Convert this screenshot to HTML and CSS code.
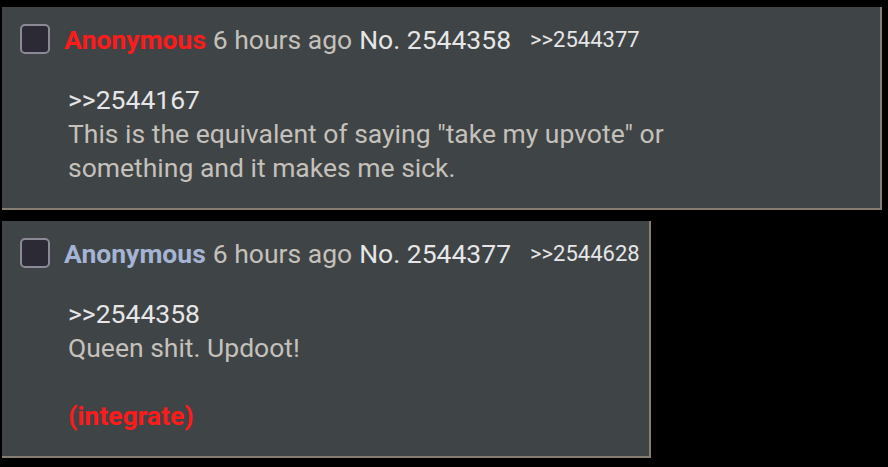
FILE: index.html
```html
<!DOCTYPE html>
<html lang="en">

<head>
    <meta charset="UTF-8">
    <meta name="viewport" content="width=device-width, initial-scale=1.0">
    <title>Thread</title>
    <link rel="stylesheet" href="styles.css">
</head>

<body>
    <div class="thread">
        <div class="post wide">
            <div class="postInfo">
                <label class="check"><input type="checkbox"><span class="box"></span></label>
                <span class="name red">Anonymous</span>
                <span class="time">6 hours ago</span>
                <span class="postNum">No. 2544358</span>
                <span class="backlink">&gt;&gt;2544377</span>
            </div>
            <div class="message">
                <span class="quotelink">&gt;&gt;2544167</span><br>
                This is the equivalent of saying "take my upvote" or something and it makes me sick.
            </div>
        </div>
        <div class="post">
            <div class="postInfo">
                <label class="check"><input type="checkbox"><span class="box"></span></label>
                <span class="name">Anonymous</span>
                <span class="time">6 hours ago</span>
                <span class="postNum">No. 2544377</span>
                <span class="backlink">&gt;&gt;2544628</span>
            </div>
            <div class="message">
                <span class="quotelink">&gt;&gt;2544358</span><br>
                Queen shit. Updoot!<br>
                <br>
                <b class="red">(integrate)</b>
            </div>
        </div>
    </div>
</body>

</html>
```

FILE: styles.css
```css
* {
    margin: 0;
    padding: 0;
    box-sizing: border-box;
}

body {
    background-color: #000;
    font-family: Roboto, "Liberation Sans", sans-serif;
    font-size: 26.5px;
    color: #c5c1ba;
}

.thread {
    display: flex;
    flex-direction: column;
    align-items: flex-start;
    gap: 11px;
    padding: 7px 6px 0 2px;
}

.post {
    background-color: #3f4447;
    border-right: 2px solid #867f71;
    border-bottom: 2px solid #867f71;
    padding: 15px 9px 23px 18px;
}

.post.wide {
    align-self: stretch;
}

.postInfo {
    display: flex;
    align-items: center;
    gap: 7px;
    height: 34px;
    white-space: nowrap;
}

.check {
    display: inline-block;
    width: 30px;
    height: 30px;
    margin-right: 7px;
}

.check input {
    display: none;
}

.check .box {
    display: block;
    width: 100%;
    height: 100%;
    background-color: #2b2a35;
    border: 2px solid #8b8a96;
    border-radius: 5px;
}

.name {
    font-weight: bold;
    color: #a6b4d3;
}

.red {
    color: #ff1a1a;
}

.postNum {
    color: #e6e6e6;
}

.backlink {
    font-size: 22px;
    color: #e6e6e6;
    margin-left: 12px;
}

.message {
    max-width: 640px;
    margin: 27px 0 0 48px;
    line-height: 34px;
}

.quotelink {
    color: #e6e6e6;
}
```
